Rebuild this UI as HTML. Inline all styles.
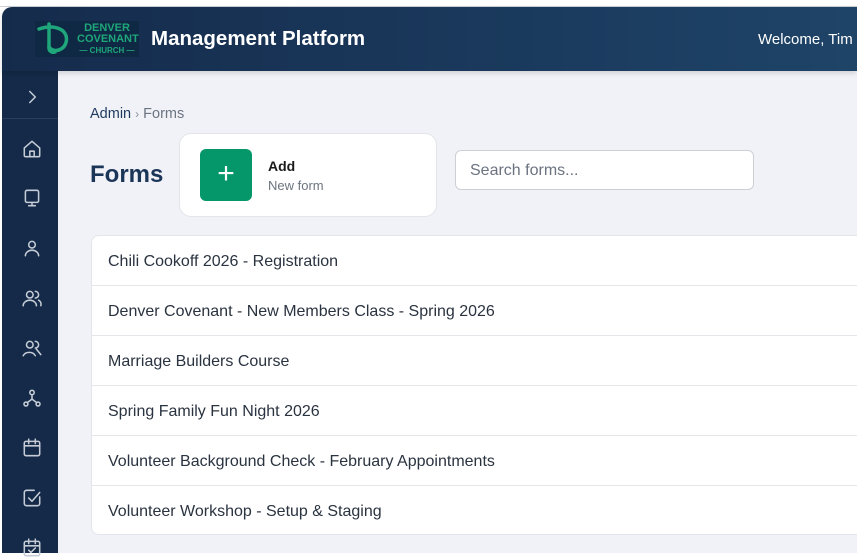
<!DOCTYPE html>
<html><head><style>
*{box-sizing:border-box;margin:0;padding:0}
body{width:857px;height:553px;overflow:hidden;background:#fff;font-family:"Liberation Sans",sans-serif;position:relative}
.top{position:absolute;left:0;top:0;width:857px;height:7px;background:#fff;border-bottom:1px solid #cfd2d6}
.hdr{position:absolute;left:2px;top:7px;width:855px;height:64px;background:linear-gradient(90deg,#152b4c,#1e4468);border-top-left-radius:10px;box-shadow:0 2px 6px rgba(0,0,0,.15);z-index:2}
.side{position:absolute;left:2px;top:60px;width:56px;height:493px;background:#142a48}
.main{position:absolute;left:58px;top:71px;width:799px;height:482px;background:#f1f2f7}
.ic{position:absolute;left:19px;width:22px;height:22px}
svg.i{fill:none;stroke:#c5ccd6;stroke-width:1.4;stroke-linecap:round;stroke-linejoin:round}
.row{height:50px;border-bottom:1px solid #e4e6ea;padding-left:16px;line-height:51px;font-size:16px;color:#2a3340}
</style></head><body>
<div class="top"></div>
<div class="side">
<svg class="i ic" style="top:26px" viewBox="0 0 20 20"><path d="M8 5l5 5-5 5"/></svg>
<div style="position:absolute;left:0;top:58px;width:56px;height:1px;background:#2a3f5c"></div>
<svg class="i ic" style="top:78px" viewBox="0 0 20 20"><path d="M3 9l7-6 7 6v7a1 1 0 0 1-1 1H4a1 1 0 0 1-1-1z M8 17v-5h4v5"/></svg>
<svg class="i ic" style="top:127px" viewBox="0 0 20 20"><rect x="4" y="3" width="12" height="11" rx="1.5"/><path d="M10 14v3M7 17h6"/></svg>
<svg class="i ic" style="top:177px" viewBox="0 0 20 20"><circle cx="10" cy="7" r="3"/><path d="M4 17a6 5 0 0 1 12 0"/></svg>
<svg class="i ic" style="top:227px" viewBox="0 0 20 20"><circle cx="8" cy="7" r="3"/><path d="M2 17a6 5 0 0 1 12 0M13 4a3 3 0 0 1 0 6M16 12a4 4 0 0 1 2 5"/></svg>
<svg class="i ic" style="top:277px" viewBox="0 0 20 20"><circle cx="8" cy="7" r="3"/><path d="M2 17a6 5 0 0 1 11 0M13 4a3 3 0 0 1 0 6M14 11l4 5"/></svg>
<svg class="i ic" style="top:327px" viewBox="0 0 20 20"><circle cx="10" cy="5" r="2"/><circle cx="4.5" cy="15.5" r="1.8"/><circle cx="15.5" cy="15.5" r="1.8"/><path d="M10 7v4l-4 3M10 11l4 3"/></svg>
<svg class="i ic" style="top:377px" viewBox="0 0 20 20"><rect x="3" y="4" width="14" height="13" rx="1.5"/><path d="M3 8h14M7 2v4M13 2v4"/></svg>
<svg class="i ic" style="top:427px" viewBox="0 0 20 20"><path d="M17 9v6a2 2 0 0 1-2 2H5a2 2 0 0 1-2-2V5a2 2 0 0 1 2-2h7"/><path d="M7 10l3 3 7-8"/></svg>
<svg class="i ic" style="top:477px" viewBox="0 0 20 20"><rect x="3" y="4" width="14" height="13" rx="1.5"/><path d="M3 8h14M7 2v4M13 2v4M7 12l2 2 4-4"/></svg>
</div>
<div class="hdr">
<div style="position:absolute;left:33px;top:14px;width:104px;height:36px;background:#0f2944">
<svg width="40" height="36" viewBox="0 0 40 36" style="position:absolute;left:0;top:0"><path d="M4 8c8-3 18-3 24 2 6 6 4 16-4 19-4 1-8 0-10-3" fill="none" stroke="#1fa67a" stroke-width="3.5" stroke-linecap="round"/><path d="M14 3v24c0 3 3 5 6 4" fill="none" stroke="#1fa67a" stroke-width="3.5" stroke-linecap="round"/></svg>
<div style="position:absolute;left:42px;top:2px;color:#1fa67a;font-weight:bold;font-size:11px;line-height:11px;text-align:center;width:60px">DENVER<br>COVENANT<br><span style="font-size:8px">— CHURCH —</span></div>
</div>
<div style="position:absolute;left:149px;top:20px;color:#fff;font-weight:bold;font-size:20.5px">Management Platform</div>
<div style="position:absolute;left:756px;top:24px;color:#fff;font-size:15px;white-space:nowrap">Welcome, Tim</div>
</div>
<div class="main">
<div style="position:absolute;left:32px;top:35px;font-size:14.5px;color:#1e3a5f">Admin <span style="color:#8a93a0;font-size:12px">›</span> <span style="color:#6b7480">Forms</span></div>
<div style="position:absolute;left:32px;top:90px;font-size:24px;font-weight:bold;color:#1b3558">Forms</div>
<div style="position:absolute;left:121px;top:62px;width:258px;height:84px;background:#fff;border:1px solid #e3e5ea;border-radius:12px">
<div style="position:absolute;left:20px;top:15px;width:52px;height:52px;background:#05976a;border-radius:6px;color:#fff;font-size:30px;line-height:50px;text-align:center;font-weight:300">+</div>
<div style="position:absolute;left:88px;top:24px;font-weight:bold;font-size:14px;color:#1a1a1a">Add</div>
<div style="position:absolute;left:88px;top:44px;font-size:13px;color:#6b7480">New form</div>
</div>
<div style="position:absolute;left:397px;top:79px;width:299px;height:40px;background:#fff;border:1px solid #ccd0d6;border-radius:6px;padding-left:14px;line-height:39px;font-size:16px;color:#6b7280">Search forms...</div>
<div style="position:absolute;left:33px;top:164px;width:780px;height:300px;background:#fff;border:1px solid #e3e5ea;border-radius:8px;overflow:hidden">
<div class="row">Chili Cookoff 2026 - Registration</div>
<div class="row">Denver Covenant - New Members Class - Spring 2026</div>
<div class="row">Marriage Builders Course</div>
<div class="row">Spring Family Fun Night 2026</div>
<div class="row">Volunteer Background Check - February Appointments</div>
<div class="row" style="border:0">Volunteer Workshop - Setup &amp; Staging</div>
</div>
</div>
</body></html>
